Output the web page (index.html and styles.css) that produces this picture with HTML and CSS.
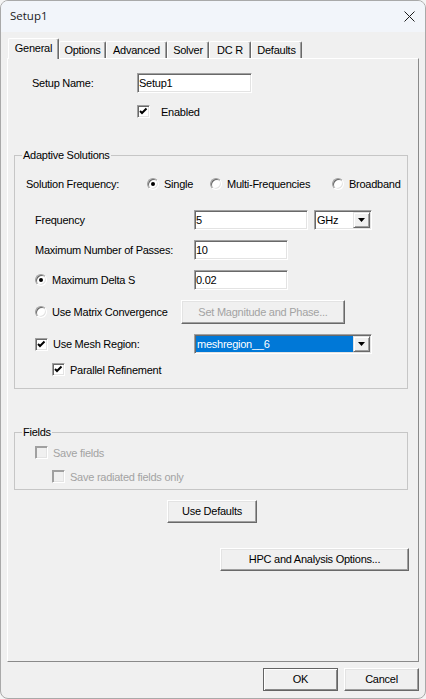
FILE: index.html
```html
<!DOCTYPE html>
<html>
<head>
<meta charset="utf-8">
<title>Setup1</title>
<link rel="stylesheet" href="styles.css">
</head>
<body>
<div class="window">
  <header class="titlebar">
    <span class="title">Setup1</span>
    <svg class="close" width="11" height="11" viewBox="0 0 11 11"><path d="M0.5 0.5 L10.5 10.5 M10.5 0.5 L0.5 10.5" stroke="#1c1c1c" stroke-width="1" fill="none"/></svg>
  </header>
  <main class="body">
    <nav class="tabs">
      <div class="tab active t-general">General</div>
      <div class="tab t-options">Options</div>
      <div class="tab t-advanced">Advanced</div>
      <div class="tab t-solver">Solver</div>
      <div class="tab t-dcr">DC R</div>
      <div class="tab t-defaults">Defaults</div>
    </nav>
    <section class="panel">
      <div class="row setup-row">
        <span class="lbl lbl-setup">Setup Name:</span>
        <div class="field w-setup">Setup1</div>
      </div>
      <div class="row check-row enabled-row">
        <span class="check"><svg width="11" height="11" viewBox="0 0 11 11"><polyline points="2,5 4,7 8.5,2.5" fill="none" stroke="#000" stroke-width="2"/></svg></span>
        <span class="enabled-text">Enabled</span>
      </div>

      <div class="group adaptive">
        <div class="legend">Adaptive Solutions</div>
        <div class="row sf-row">
          <span class="lbl lbl-sf">Solution Frequency:</span>
          <span class="opt opt-single"><span class="radio on"></span><span>Single</span></span>
          <span class="opt opt-multi"><span class="radio"></span><span>Multi-Frequencies</span></span>
          <span class="opt"><span class="radio"></span><span>Broadband</span></span>
        </div>
        <div class="row form-row freq-row">
          <span class="lbl lbl-col">Frequency</span>
          <div class="field w-freq">5</div>
          <div class="combo w-unit">
            <span class="combo-text">GHz</span>
            <span class="combo-btn"><svg width="7" height="4" viewBox="0 0 7 4"><path d="M0 0 H7 L3.5 4 Z" fill="#000"/></svg></span>
          </div>
        </div>
        <div class="row form-row gap-row">
          <span class="lbl lbl-col">Maximum Number of Passes:</span>
          <div class="field w-short">10</div>
        </div>
        <div class="row form-row gap-row">
          <span class="lbl lbl-col opt"><span class="radio on"></span><span>Maximum Delta S</span></span>
          <div class="field w-short">0.02</div>
        </div>
        <div class="row matrix-row">
          <span class="lbl lbl-matrix opt"><span class="radio"></span><span>Use Matrix Convergence</span></span>
          <div class="btn disabled w-mag">Set Magnitude and Phase...</div>
        </div>
        <div class="row form-row gap-row">
          <span class="lbl lbl-col opt"><span class="check"><svg width="11" height="11" viewBox="0 0 11 11"><polyline points="2,5 4,7 8.5,2.5" fill="none" stroke="#000" stroke-width="2"/></svg></span><span>Use Mesh Region:</span></span>
          <div class="combo w-mesh">
            <span class="combo-text selected">meshregion__6</span>
            <span class="combo-btn"><svg width="7" height="4" viewBox="0 0 7 4"><path d="M0 0 H7 L3.5 4 Z" fill="#000"/></svg></span>
          </div>
        </div>
        <div class="row check-row par-row">
          <span class="check"><svg width="11" height="11" viewBox="0 0 11 11"><polyline points="2,5 4,7 8.5,2.5" fill="none" stroke="#000" stroke-width="2"/></svg></span>
          <span>Parallel Refinement</span>
        </div>
      </div>

      <div class="group fields">
        <div class="legend">Fields</div>
        <div class="row check-row save-row disabled-text">
          <span class="check disabled"></span>
          <span>Save fields</span>
        </div>
        <div class="row check-row rad-row disabled-text">
          <span class="check disabled"></span>
          <span>Save radiated fields only</span>
        </div>
      </div>

      <div class="btn use-defaults">Use Defaults</div>
      <div class="btn hpc">HPC and Analysis Options...</div>
    </section>
    <footer class="footer">
      <div class="btn default w-dlg">OK</div>
      <div class="btn w-dlg">Cancel</div>
    </footer>
  </main>
</div>
</body>
</html>
```

FILE: styles.css
```css
html, body {
  margin: 0;
  padding: 0;
  background: #f4f4f4;
}

body {
  font-family: "Liberation Sans", Arial, sans-serif;
  font-size: 11px;
  letter-spacing: -0.25px;
  color: #000;
}

.window {
  box-sizing: border-box;
  width: 426px;
  height: 699px;
  border: 1px solid #a9a9a9;
  border-radius: 8px;
  overflow: hidden;
  background: #f0f0f0;
}

/* Title bar */
.titlebar {
  height: 31px;
  background: #f2f5fa;
  display: flex;
  align-items: center;
  justify-content: space-between;
  padding: 0 10px 0 9px;
}

.title {
  font-family: "Open Sans", "Noto Sans", sans-serif;
  font-size: 11.5px;
  letter-spacing: 0;
  color: #1a1a1a;
  line-height: 16px;
  margin-top: -1px;
}

.close {
  display: block;
}

/* Body */
.body {
  padding: 6px 6px 0 6px;
}

/* Tabs */
.tabs {
  display: flex;
  align-items: flex-end;
  padding-left: 1px;
  height: 20px;
}

.tab {
  box-sizing: border-box;
  height: 17px;
  padding-top: 2px;
  line-height: 13px;
  text-align: center;
  border-top: 1px solid #fff;
  border-left: 1px solid #fff;
  border-right: 1px solid #696969;
  box-shadow: inset -1px 0 0 #a0a0a0;
  border-radius: 2px 2px 0 0;
  background: #f0f0f0;
  white-space: nowrap;
}

.tab.active {
  height: 21px;
  margin-bottom: -1px;
  padding-top: 3px;
  position: relative;
  z-index: 1;
}

.t-general { width: 51px; }
.t-options { width: 47px; }
.t-advanced { width: 61px; }
.t-solver { width: 42px; }
.t-dcr { width: 42px; }
.t-defaults { width: 51px; }

/* Panel */
.panel {
  box-sizing: border-box;
  width: 412px;
  height: 604px;
  border-top: 1px solid #fff;
  border-left: 1px solid #fff;
  border-right: 1px solid #8a8a8a;
  border-bottom: 1px solid #8a8a8a;
}

.row {
  display: flex;
  align-items: center;
}

.lbl {
  flex: none;
  line-height: 13px;
  white-space: nowrap;
}

.setup-row {
  margin-top: 14px;
  height: 20px;
  padding-left: 24px;
}

.lbl-setup { width: 105px; }

.check-row {
  height: 13px;
  gap: 5px;
}

.enabled-row {
  margin-top: 12px;
  padding-left: 129px;
  gap: 11px;
}

/* Sunken field */
.field {
  box-sizing: border-box;
  height: 20px;
  background: #fff;
  border: 1px solid;
  border-color: #a0a0a0 #fff #fff #a0a0a0;
  box-shadow: inset 1px 1px 0 #696969, inset -1px -1px 0 #e3e3e3;
  padding-left: 1px;
  line-height: 18px;
  white-space: nowrap;
}

.w-setup { width: 115px; }
.w-freq { width: 114px; }
.w-short { width: 94px; }

/* Checkbox */
.check {
  box-sizing: border-box;
  flex: none;
  width: 13px;
  height: 13px;
  background: #fff;
  border: 1px solid;
  border-color: #a0a0a0 #fff #fff #a0a0a0;
  box-shadow: inset 1px 1px 0 #696969, inset -1px -1px 0 #e3e3e3;
}

.check svg {
  display: block;
}

.check.disabled {
  background: #f0f0f0;
  box-shadow: inset 1px 1px 0 #a0a0a0, inset -1px -1px 0 #e3e3e3;
}

/* Radio */
.opt {
  display: flex;
  align-items: center;
  gap: 5px;
  white-space: nowrap;
}

.radio {
  box-sizing: border-box;
  flex: none;
  width: 12px;
  height: 12px;
  border-radius: 50%;
  background: #fff;
  border: 1px solid;
  border-color: #a0a0a0 #fff #fff #a0a0a0;
  box-shadow: inset 1px 1px 0 #696969, inset -1px -1px 0 #e3e3e3;
  display: flex;
  align-items: center;
  justify-content: center;
}

.radio.on::after {
  content: "";
  width: 4px;
  height: 4px;
  border-radius: 50%;
  background: #000;
}

/* Group boxes */
.group {
  box-sizing: border-box;
  width: 394px;
  margin-left: 6px;
  border: 1px solid #c6c6c6;
}

.legend {
  width: fit-content;
  margin: -7px 0 0 7px;
  padding: 0 1px;
  background: #f0f0f0;
  line-height: 13px;
  white-space: nowrap;
}

.adaptive {
  margin-top: 37px;
  padding-bottom: 12px;
}

.sf-row {
  margin-top: 15px;
  height: 14px;
  padding-left: 11px;
}

.lbl-sf { width: 121px; }
.opt-single { width: 63px; }
.opt-multi { width: 122px; }

.form-row {
  height: 20px;
  padding-left: 20px;
}

.freq-row { margin-top: 19px; }
.gap-row { margin-top: 10px; }

.lbl-col { width: 159px; }

.matrix-row {
  margin-top: 10px;
  height: 24px;
  padding-left: 20px;
}

.lbl-matrix { width: 146px; }

/* Combo box */
.combo {
  box-sizing: border-box;
  height: 20px;
  display: flex;
  align-items: center;
  background: #fff;
  border: 1px solid;
  border-color: #a0a0a0 #fff #fff #a0a0a0;
  box-shadow: inset 1px 1px 0 #696969, inset -1px -1px 0 #e3e3e3;
  padding: 1px 1px 1px 1px;
}

.w-unit { width: 58px; margin-left: 6px; }
.w-mesh { width: 178px; }

.combo-text {
  flex: 1;
  height: 16px;
  line-height: 16px;
  padding-left: 1px;
  white-space: nowrap;
}

.combo-text.selected {
  background: #0078d7;
  color: #fff;
}

.combo-btn {
  box-sizing: border-box;
  flex: none;
  width: 17px;
  height: 16px;
  background: #f0f0f0;
  border: 1px solid;
  border-color: #e3e3e3 #696969 #696969 #e3e3e3;
  box-shadow: inset 1px 1px 0 #fff, inset -1px -1px 0 #a0a0a0;
  display: flex;
  align-items: center;
  justify-content: center;
}

.combo-btn svg { display: block; }

.par-row {
  margin-top: 9px;
  padding-left: 37px;
}

/* Fields group */
.fields {
  margin-top: 43px;
  padding-bottom: 6px;
}

.save-row {
  margin-top: 7px;
  padding-left: 20px;
}

.rad-row {
  margin-top: 11px;
  padding-left: 37px;
}

.disabled-text {
  color: #a3a3a3;
}

/* Buttons */
.btn {
  box-sizing: border-box;
  height: 23px;
  background: #f0f0f0;
  border: 1px solid;
  border-color: #fff #696969 #696969 #fff;
  box-shadow: inset -1px -1px 0 #a0a0a0, inset 1px 1px 0 #e3e3e3;
  display: flex;
  align-items: center;
  justify-content: center;
  white-space: nowrap;
  line-height: 13px;
}

.btn.disabled {
  color: #a3a3a3;
}

.w-mag {
  width: 164px;
  height: 24px;
}

.use-defaults {
  width: 90px;
  margin-top: 10px;
  margin-left: 159px;
}

.hpc {
  width: 189px;
  margin-top: 25px;
  margin-left: 212px;
}

.footer {
  display: flex;
  justify-content: flex-end;
  gap: 6px;
  margin-top: 6px;
}

.w-dlg { width: 75px; }

.btn.default {
  border-color: #646464;
  box-shadow: inset 1px 1px 0 #fff, inset -1px -1px 0 #8a8a8a;
}
```
